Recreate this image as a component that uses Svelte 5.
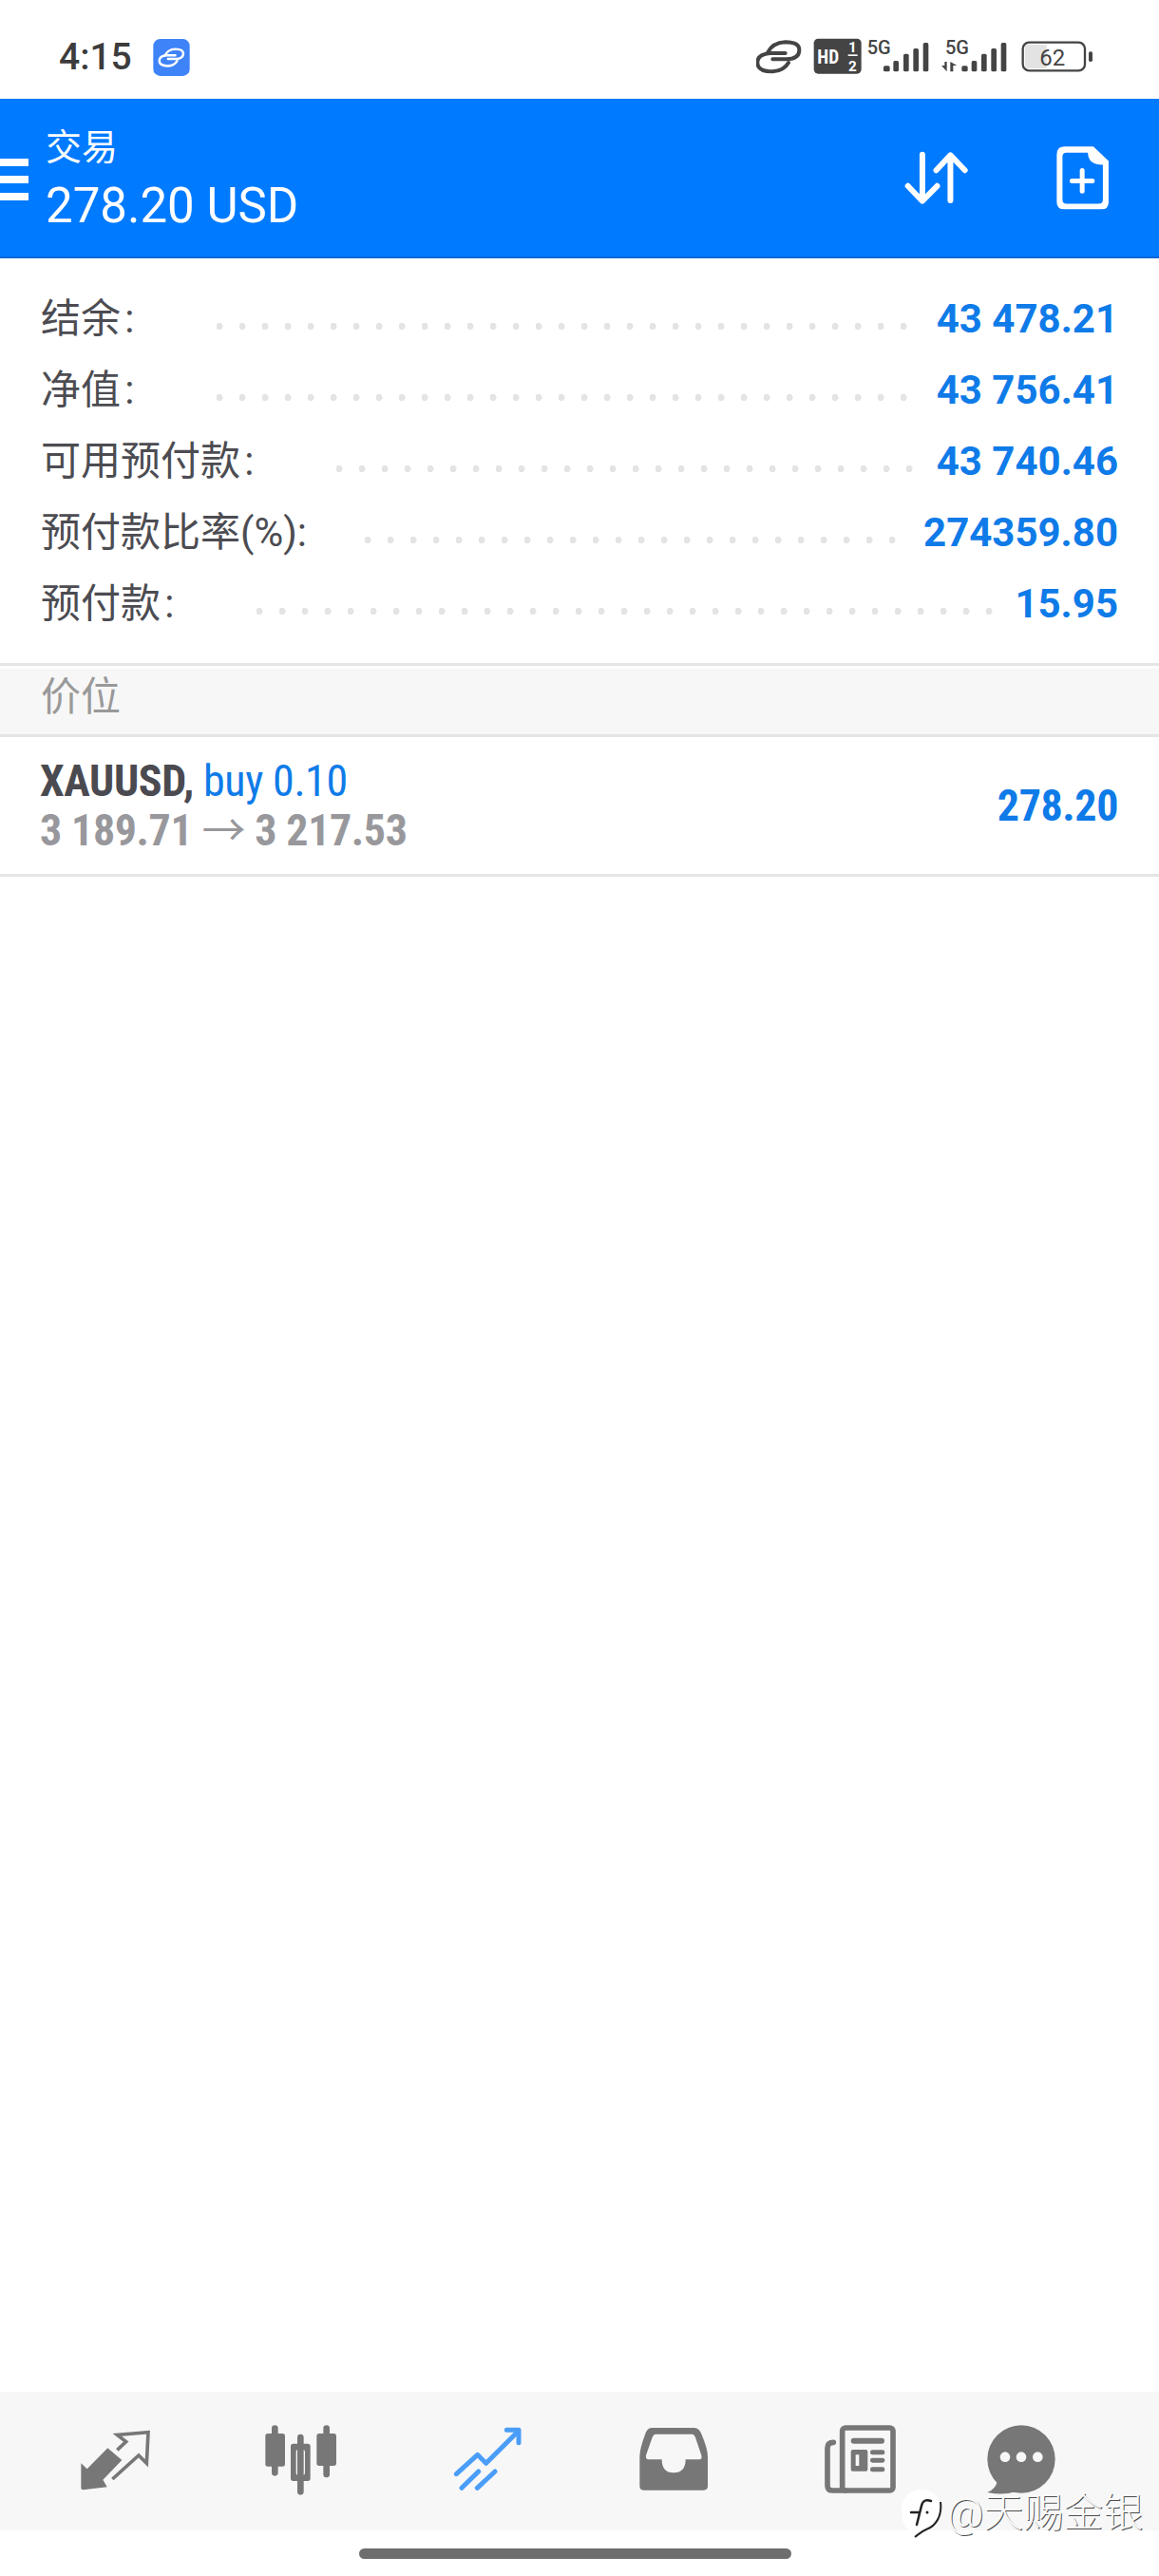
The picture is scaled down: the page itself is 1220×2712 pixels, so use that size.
<script>
  const rows = [
    { label: '结余\u200a:', value: '43 478.21', dots: 31 },
    { label: '净值\u200a:', value: '43 756.41', dots: 31 },
    { label: '可用预付款\u200a:', value: '43 740.46', dots: 26 },
    { label: '预付款比率(%):', value: '274359.80', dots: 24, tight: true },
    { label: '预付款\u200a:', value: '15.95', dots: 33 }
  ];
</script>

<div class="page">
  <div class="status">
    <span class="time">4:15</span>
    <svg class="app-badge" viewBox="480 122 116 118" width="39" height="39">
      <rect x="480" y="122" width="116" height="118" rx="22" fill="#3f83f8" />
      <g transform="translate(469 77) scale(.58)" fill="none" stroke="#fff" stroke-width="13" stroke-linecap="round">
        <path d="M85 165Q100 135 140 133Q184 133 184 158Q184 185 145 187H100" />
        <path d="M150 198Q135 224 100 226Q52 226 52 198Q52 170 95 168H140" />
      </g>
    </svg>
    <svg class="status-icons" viewBox="48 90 1065 180" width="355" height="60">
      <g fill="none" stroke="#444" stroke-width="12" stroke-linecap="round">
        <path d="M85 165Q100 135 140 133Q184 133 184 158Q184 185 145 187H100" />
        <path d="M150 198Q135 224 100 226Q52 226 52 198Q52 170 95 168H140" />
      </g>
      <rect x="230" y="122" width="150" height="111" rx="14" fill="#444" />
      <text x="241" y="200" class="hd">HD</text>
      <text x="339" y="166" class="hd-small">1</text>
      <text x="339" y="224" class="hd-small">2</text>
      <rect x="338" y="172" width="30" height="5" fill="#fff" />
      <text x="398" y="172" class="net">5G</text>
      <g fill="#444">
        <rect x="450" y="208" width="20" height="18" rx="5" />
        <rect x="481" y="192" width="17" height="34" rx="5" />
        <rect x="513" y="170" width="17" height="56" rx="5" />
        <rect x="544" y="153" width="17" height="73" rx="5" />
        <rect x="575" y="135" width="17" height="91" rx="5" />
      </g>
      <text x="645" y="172" class="net">5G</text>
      <g fill="#444">
        <path d="M633 207H643V195H650V226Z" />
        <path d="M661 226V195L682 207H670V226Z" />
        <rect x="697" y="208" width="19" height="18" rx="5" />
        <rect x="728" y="192" width="17" height="34" rx="5" />
        <rect x="759" y="170" width="17" height="56" rx="5" />
        <rect x="790" y="153" width="17" height="73" rx="5" />
        <rect x="821" y="135" width="17" height="91" rx="5" />
      </g>
      <rect x="890" y="134" width="196" height="89" rx="20" fill="none" stroke="#444" stroke-width="7" />
      <path d="M905 141H965V216H905Q897 216 897 208V149Q897 141 905 141Z" fill="#e3e3e3" />
      <text x="943" y="206" class="batt">62</text>
      <rect x="1098" y="163" width="12" height="32" rx="5" fill="#444" />
    </svg>
  </div>

  <header class="bar">
    <div class="burger"><i></i><i></i><i></i></div>
    <div class="titles">
      <div class="title">交易</div>
      <div class="profit">278.20 USD</div>
    </div>
    <div class="actions">
      <svg viewBox="510 470 220 190" width="73" height="63" fill="none" stroke="#fff" stroke-width="18" stroke-linecap="round" stroke-linejoin="round">
        <path d="M573 490V636M527 590L573 638L620 590" />
        <path d="M662 636V494M617 540L662 492L708 540" />
      </svg>
      <svg viewBox="995 455 185 218" width="62" height="73">
        <path d="M1030 465H1120L1168 510V640Q1168 662 1145 662H1030Q1005 662 1005 640V490Q1005 465 1030 465Z" fill="#fff" />
        <path d="M1036 484H1103Q1103 522 1150 522V632Q1150 645 1136 645H1036Q1023 645 1023 632V497Q1023 484 1036 484Z" fill="#007aff" />
        <path d="M1085 540V605M1053 573H1117" stroke="#fff" stroke-width="15" stroke-linecap="round" />
      </svg>
    </div>
  </header>

  <main class="content">
    <section class="summary">
      {#each rows as row}
        <div class="row">
          <span class="label">{row.label}</span>
          <span class="leader" class:tight={row.tight} style="width:{row.dots * 24}px"></span>
          <span class="value">{row.value}</span>
        </div>
      {/each}
    </section>

    <section class="positions">
      <div class="section-head">价位</div>
      <div class="position">
        <div class="pos-info">
          <div class="pos-top"><b>XAUUSD,</b> <span class="buy">buy 0.10</span></div>
          <div class="pos-prices">3 189.71 <span class="arrow">→</span> 3 217.53</div>
        </div>
        <div class="pos-profit">278.20</div>
      </div>
    </section>
  </main>

  <nav class="tabs">
    <svg viewBox="33 0 300 300" width="100" height="100">
      <path d="M160 112L205 150L145 212L158 235L82 244Q76 244 76 238V160L95 178Z" fill="#777" />
      <path d="M190 118L218 92L190 70L288 62L283 160L258 135L175 210" fill="none" stroke="#777" stroke-width="11" />
    </svg>
    <svg viewBox="621 0 300 300" width="100" height="100">
      <g stroke="#777" stroke-width="20" stroke-linecap="round">
        <path d="M688 50V190M769 78V250M851 50V195" />
      </g>
      <rect x="658" y="66" width="62" height="104" rx="8" fill="#777" />
      <path fill-rule="evenodd" d="M746 98H792Q800 98 800 106V208Q800 216 792 216H746Q738 216 738 208V106Q738 98 746 98ZM763 116Q755 116 755 124V190Q755 198 763 198H775Q783 198 783 190V124Q783 116 775 116Z" fill="#777" />
      <rect x="820" y="66" width="62" height="102" rx="8" fill="#777" />
    </svg>
    <svg viewBox="6 0 300 300" width="100" height="100" fill="none" stroke="#4a9df8" stroke-width="15" stroke-linecap="round" stroke-linejoin="round">
      <path d="M58 194L125 133L152 160L250 62" />
      <path d="M217 55H255V95" />
      <path d="M75 238L128 186M124 238L180 186" />
    </svg>
    <svg viewBox="597 0 300 300" width="100" height="100">
      <path d="M678 48H812Q828 48 836 70Q855 115 855 140V232Q855 245 842 245H652Q640 245 640 232V140Q640 115 655 75Q662 48 678 48Z" fill="#777" />
      <path d="M690 68H805Q812 68 816 78L835 135Q838 148 828 148H785Q785 190 747 190Q710 190 710 148H668Q658 148 660 135L680 78Q684 68 690 68Z" fill="#f7f7f7" />
    </svg>
    <svg viewBox="-15 0 300 300" width="100" height="100">
      <g fill="none" stroke="#777" stroke-width="17" stroke-linecap="round">
        <rect x="80" y="48" width="160" height="198" rx="10" />
        <path d="M52 94Q33 94 33 112V230Q33 246 50 246H90" />
      </g>
      <rect x="107" y="80" width="106" height="18" rx="9" fill="#777" />
      <path fill-rule="evenodd" d="M113 117H154Q160 117 160 123V179Q160 185 154 185H113Q107 185 107 179V123Q107 117 113 117ZM122 133V168H133V133Z" fill="#777" />
      <rect x="168" y="118" width="46" height="15" rx="7" fill="#777" />
      <rect x="168" y="143" width="46" height="15" rx="7" fill="#777" />
      <rect x="168" y="172" width="46" height="15" rx="7" fill="#777" />
    </svg>
    <svg viewBox="495 0 300 300" width="100" height="100">
      <circle cx="645" cy="147" r="107" fill="#777" />
      <path d="M570 215Q565 240 538 252Q590 262 625 250Z" fill="#777" />
      <circle cx="594" cy="140" r="16" fill="#f7f7f7" />
      <circle cx="645" cy="140" r="16" fill="#f7f7f7" />
      <circle cx="697" cy="140" r="16" fill="#f7f7f7" />
    </svg>
  </nav>

  <div class="home"></div>

  <div class="watermark">
    <svg viewBox="0 0 44 52" width="44" height="52">
      <path d="M22 1C34 1 43 10 43 22C43 33 35 40 27 43C22 45 19 48 15 51C15 47 14 45 10 44C4 42 1 34 1 22C1 10 10 1 22 1Z" fill="#fff" />
      <path d="M42 14C44 30 36 40 27 43C22 45 19 48 15 51" fill="none" stroke="#222" stroke-width="2" />
      <path d="M32 13Q24 10 22 18L17 38M11 25H20" fill="none" stroke="#222" stroke-width="2.5" stroke-linecap="round" />
      <circle cx="28" cy="25" r="1.5" fill="#222" />
    </svg>
    <span>@天赐金银</span>
  </div>
</div>

<style>
  :global(body) {
    margin: 0;
    background: #fff;
  }

  .page {
    position: relative;
    display: flex;
    flex-direction: column;
    width: 1220px;
    height: 2712px;
    overflow: hidden;
    font-family: Roboto, "Noto Sans CJK SC", sans-serif;
    color: #4c4c52;
  }

  /* status bar */
  .status {
    display: flex;
    align-items: center;
    box-sizing: border-box;
    height: 104px;
    padding: 16px 69px 0 62px;
  }

  .time {
    font-size: 39px;
    font-weight: 500;
    color: #3c3c3c;
  }

  .app-badge {
    margin-left: 22px;
  }

  .status-icons {
    margin-left: auto;
  }

  .hd {
    font: 700 58px Roboto, sans-serif;
    font-stretch: 85%;
    fill: #fff;
  }

  .hd-small {
    font: 700 46px Roboto, sans-serif;
    fill: #fff;
  }

  .net {
    font: 500 60px Roboto, sans-serif;
    fill: #444;
  }

  .batt {
    font: 400 72px Roboto, sans-serif;
    fill: #444;
  }

  /* blue toolbar */
  .bar {
    display: flex;
    align-items: center;
    box-sizing: border-box;
    height: 168px;
    background: #007aff;
    border-bottom: 2px solid #0068d8;
    color: #fff;
    padding-right: 49px;
  }

  .burger {
    display: flex;
    flex-direction: column;
    gap: 10px;
    margin-top: 4px;
  }

  .burger i {
    display: block;
    width: 30px;
    height: 8px;
    background: #fff;
  }

  .titles {
    align-self: flex-start;
    margin: 28px 0 0 18px;
  }

  .title {
    font-size: 38px;
    line-height: 46px;
    margin-bottom: 9px;
  }

  .profit {
    font-size: 51px;
    line-height: 60px;
  }

  .actions {
    display: flex;
    align-items: center;
    gap: 86px;
    margin-left: auto;
  }

  /* account summary */
  .content {
    flex: 1;
  }

  .summary {
    padding-top: 26px;
  }

  .row {
    display: flex;
    height: 75px;
    line-height: 75px;
    padding: 0 43px 0 43px;
    font-size: 42px;
  }

  .leader {
    flex: none;
    align-self: flex-start;
    height: 7px;
    margin: 42px 0 0 78px;
    background: radial-gradient(circle 3.5px at 12px 3.5px, #e4e4e4 100%, transparent) left top / 24px 7px repeat-x;
  }

  .leader.tight {
    margin-left: 52px;
  }

  .value {
    margin-left: auto;
    font-weight: 700;
    color: #0f7be8;
  }

  /* open positions */
  .positions {
    margin-top: 25px;
    border-top: 3px solid #e5e5e5;
    padding-top: 3px;
  }

  .section-head {
    height: 69px;
    line-height: 60px;
    padding-left: 43px;
    font-size: 42px;
    background: #f7f7f7;
    border-bottom: 3px solid #e5e5e5;
    color: #999;
  }

  .position {
    display: flex;
    align-items: center;
    justify-content: space-between;
    box-sizing: border-box;
    height: 147px;
    padding: 0 43px 0 42px;
    border-bottom: 3px solid #e5e5e5;
    font-size: 46px;
    line-height: 52px;
    letter-spacing: -0.4px;
    font-stretch: 75%;
  }

  .pos-top b {
    font-weight: 700;
    color: #4a4a50;
  }

  .buy {
    color: #0f7be8;
  }

  .pos-prices {
    font-weight: 700;
    color: #98989c;
  }

  .arrow {
    font-weight: 400;
  }

  .pos-profit {
    font-size: 46px;
    font-weight: 700;
    color: #0f7be8;
  }

  /* bottom tabs */
  .tabs {
    display: grid;
    grid-template-columns: repeat(5, 196px) 144px;
    justify-items: center;
    box-sizing: border-box;
    height: 146px;
    padding: 22px 0 0 23px;
    background: #f7f7f7;
  }

  .home {
    width: 455px;
    height: 11px;
    margin: 19px 0 18px 378px;
    border-radius: 6px;
    background: #6e6e6e;
  }

  .watermark {
    position: absolute;
    left: 948px;
    top: 2620px;
    display: flex;
    align-items: center;
    gap: 5px;
    font-size: 42px;
    line-height: 48px;
    font-weight: 300;
    color: #fafafa;
    text-shadow: 1px 1px 0 rgba(0, 0, 0, 0.7);
  }
</style>
